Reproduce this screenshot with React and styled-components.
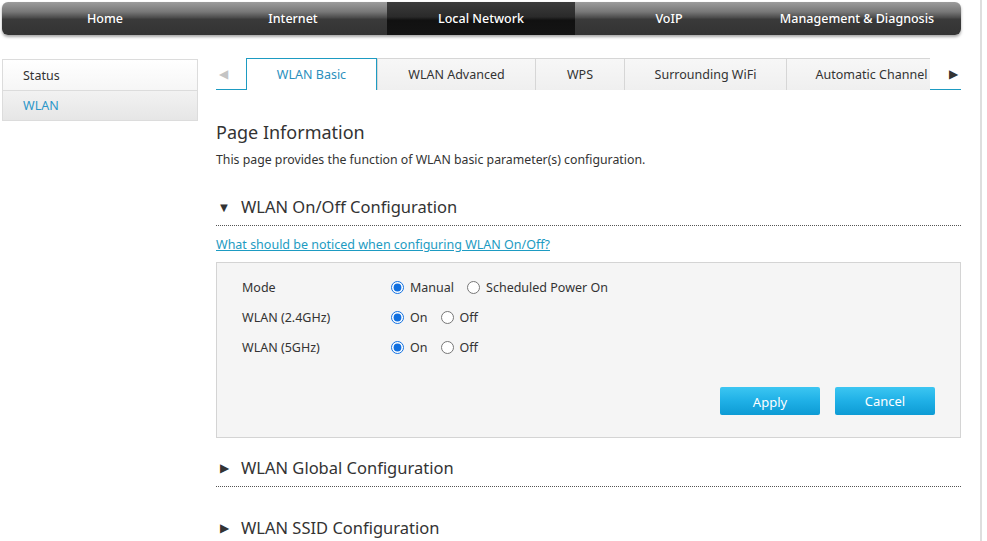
import React from "react";
import styled, { createGlobalStyle } from "styled-components";

const Global = createGlobalStyle`
  html, body { margin: 0; padding: 0; background: #fff; }
  body { font-family: "Noto Sans", "Open Sans", sans-serif; color: #333; }
  * { box-sizing: border-box; }
`;

const Page = styled.div`
  width: 982px;
  min-height: 100vh;
  border-right: 2px solid #dedede;
  padding: 2px 0 0 2px;
`;

const Nav = styled.nav`
  width: 959px;
  height: 33px;
  border-radius: 6px;
  display: flex;
  padding: 0 10px 0 9px;
  overflow: hidden;
  background: linear-gradient(to bottom, #9c9c9c 0%, #777 30%, #4a4a4a 48%, #3a3a3a 52%, #333 100%);
  box-shadow: 0 2px 3px rgba(0,0,0,0.35);
`;

const NavItem = styled.div`
  width: 188px;
  display: flex;
  align-items: center;
  justify-content: center;
  color: #fff;
  font-size: 12.5px;
  font-weight: 500;
  background: ${p => p.$active ? "linear-gradient(to bottom, #3c3c3c 0%, #2a2a2a 45%, #111 55%, #141414 100%)" : "transparent"};
`;

const Body = styled.div`
  display: flex;
  gap: 18px;
  margin-top: 23px;
  width: 959px;
`;

const Side = styled.div`
  width: 196px;
  flex: none;
  margin-top: 1px;
  border: 1px solid #dcdcdc;
  align-self: flex-start;
`;

const SideItem = styled.div`
  height: 30px;
  display: flex;
  align-items: center;
  padding-left: 20px;
  font-size: 12.5px;
  color: ${p => p.$active ? "#2b97c9" : "#333"};
  background: ${p => p.$active ? "linear-gradient(to bottom, #f2f2f2, #e6e6e6)" : "linear-gradient(to bottom, #fff, #f6f6f6)"};
  border-top: ${p => p.$first ? "none" : "1px solid #dcdcdc"};
`;

const Main = styled.div`
  flex: 1;
  min-width: 0;
`;

const TabStrip = styled.div`
  display: flex;
  height: 32px;
  border-bottom: 1px solid #1d9bc2;
`;

const Arrow = styled.div`
  width: ${p => p.$w}px;
  flex: none;
  display: flex;
  align-items: center;
  padding-left: ${p => p.$pl}px;
  font-size: 12px;
  color: ${p => p.$dim ? "#c4c4c4" : "#333"};
`;

const TabsViewport = styled.div`
  flex: 1;
  display: flex;
  overflow: hidden;
  height: 32px;
`;

const Tab = styled.div`
  width: ${p => p.$w}px;
  flex: none;
  display: flex;
  align-items: center;
  justify-content: center;
  font-size: 12.5px;
  white-space: nowrap;
  color: ${p => p.$active ? "#2a8fbd" : "#333"};
  background: ${p => p.$active ? "#fff" : "linear-gradient(to bottom, #f7f7f7, #efefef)"};
  border: 1px solid ${p => p.$active ? "#1d9bc2" : "#d6d6d6"};
  border-bottom: ${p => p.$active ? "1px solid #fff" : "none"};
  border-left-width: ${p => p.$noLeft ? "0" : "1px"};
  margin-bottom: ${p => p.$active ? "-1px" : "0"};
  height: ${p => p.$active ? "33px" : "32px"};
`;

const H1 = styled.h1`
  margin: 30px 0 0;
  font-size: 18px;
  font-weight: 400;
  color: #333;
  line-height: 24px;
`;

const Desc = styled.p`
  margin: 7px 0 0;
  font-size: 12.3px;
  line-height: 18px;
  color: #333;
`;

const SectionHead = styled.div`
  display: flex;
  align-items: center;
  gap: 11px;
  margin-top: ${p => p.$mt}px;
  line-height: 26px;
  padding: 0 0 5px 2px;
  font-size: 16.5px;
  color: #333;
  border-bottom: 1px dotted #555;
`;

const Caret = styled.span`
  font-size: ${p => p.$down ? "13px" : "12px"};
  width: 12px;
  color: #333;
  display: inline-flex;
  justify-content: center;
`;

const HelpLink = styled.a`
  display: inline-block;
  margin-top: 10px;
  font-size: 12.5px;
  line-height: 18px;
  color: #1d9bc2;
  text-decoration: underline;
`;

const Box = styled.div`
  margin-top: 8px;
  background: #f5f5f5;
  border: 1px solid #d4d4d4;
  height: 176px;
  padding: 9px 0 0 25px;
`;

const Row = styled.div`
  display: flex;
  align-items: center;
  height: 30px;
  font-size: 12.5px;
`;

const Label = styled.div`
  width: 149px;
  color: #333;
`;

const Opt = styled.label`
  display: inline-flex;
  align-items: center;
  margin-right: 13px;
  color: #333;
  gap: 6px;
`;

const Radio = styled.input.attrs({ type: "radio" })`
  margin: 0;
  width: 13px;
  height: 13px;
  accent-color: #1170e0;
`;

const Actions = styled.div`
  display: flex;
  justify-content: flex-end;
  gap: 15px;
  margin-top: 25px;
  padding-right: 25px;
`;

const Button = styled.button`
  width: 100px;
  height: 28px;
  border: none;
  border-radius: 2px;
  color: #fff;
  font-family: inherit;
  font-size: 13px;
  background: linear-gradient(to bottom, #3cc6f2 0%, #1fb0e6 50%, #0d9bd4 100%);
  padding: 0;
  padding-top: ${p => p.$low ? "2px" : "0"};
`;

const tabs = [
  { t: "WLAN Basic", w: 131, active: true },
  { t: "WLAN Advanced", w: 159 },
  { t: "WPS", w: 89 },
  { t: "Surrounding WiFi", w: 162 },
  { t: "Automatic Channel", w: 170 },
];

export default function App() {
  return (
    <>
      <Global />
      <Page>
        <Nav>
          {["Home", "Internet", "Local Network", "VoIP", "Management & Diagnosis"].map(n => (
            <NavItem key={n} $active={n === "Local Network"}>{n}</NavItem>
          ))}
        </Nav>
        <Body>
          <Side>
            <SideItem $first>Status</SideItem>
            <SideItem $active>WLAN</SideItem>
          </Side>
          <Main>
            <TabStrip>
              <Arrow $w={30} $pl={3} $dim>◀</Arrow>
              <TabsViewport>
                {tabs.map((t, i) => (
                  <Tab key={t.t} $w={t.w} $active={t.active} $noLeft={i > 1}>{t.t}</Tab>
                ))}
              </TabsViewport>
              <Arrow $w={31} $pl={19}>▶</Arrow>
            </TabStrip>
            <H1>Page Information</H1>
            <Desc>This page provides the function of WLAN basic parameter(s) configuration.</Desc>
            <SectionHead $mt={25}><Caret $down>▼</Caret>WLAN On/Off Configuration</SectionHead>
            <HelpLink href="#">What should be noticed when configuring WLAN On/Off?</HelpLink>
            <Box>
              <Row>
                <Label>Mode</Label>
                <Opt><Radio name="mode" defaultChecked />Manual</Opt>
                <Opt><Radio name="mode" />Scheduled Power On</Opt>
              </Row>
              <Row>
                <Label>WLAN (2.4GHz)</Label>
                <Opt><Radio name="w24" defaultChecked />On</Opt>
                <Opt><Radio name="w24" />Off</Opt>
              </Row>
              <Row>
                <Label>WLAN (5GHz)</Label>
                <Opt><Radio name="w5" defaultChecked />On</Opt>
                <Opt><Radio name="w5" />Off</Opt>
              </Row>
              <Actions>
                <Button $low>Apply</Button>
                <Button>Cancel</Button>
              </Actions>
            </Box>
            <SectionHead $mt={17}><Caret>▶</Caret>WLAN Global Configuration</SectionHead>
            <SectionHead $mt={28}><Caret>▶</Caret>WLAN SSID Configuration</SectionHead>
          </Main>
        </Body>
      </Page>
    </>
  );
}
